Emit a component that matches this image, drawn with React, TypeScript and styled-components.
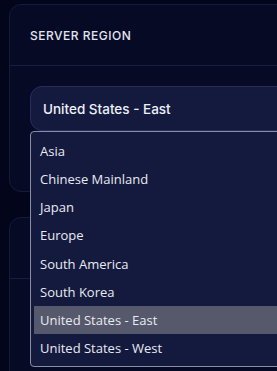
import React, { useState } from "react";
import styled, { createGlobalStyle } from "styled-components";

const GlobalStyle = createGlobalStyle`
  html, body {
    margin: 0;
    padding: 0;
    background-color: #03061a;
    overflow: hidden;
  }
  * {
    box-sizing: border-box;
  }
`;

const Page = styled.div`
  display: flex;
  flex-direction: column;
  gap: 25px;
  padding: 4px 0 0 9px;
  width: 340px;
  min-height: 371px;
  font-family: Inter, "Noto Sans", sans-serif;
`;

const Card = styled.section`
  background-color: #060a25;
  border: 1px solid #151b3b;
  border-radius: 12px;
`;

const CardHeader = styled.div`
  height: 61px;
  display: flex;
  align-items: center;
  padding: 0 20px;
  border-bottom: 1px solid #181e41;
`;

const CardTitle = styled.h2`
  margin: 0;
  font-size: 12px;
  font-weight: 500;
  letter-spacing: 0.5px;
  text-transform: uppercase;
  color: #e2e5f0;
`;

const CardBody = styled.div<{ $bottom: number }>`
  padding: 20px 20px ${({ $bottom }) => $bottom}px 20px;
`;

const SelectWrap = styled.div`
  position: relative;
`;

const SelectBox = styled.div`
  height: 45px;
  display: flex;
  align-items: center;
  padding: 0 12px;
  background-color: #131a3e;
  border: 1px solid #262d5c;
  border-radius: 12px;
  font-size: 13.5px;
  font-weight: 500;
  color: #eef0f8;
`;

const Menu = styled.ul`
  position: absolute;
  top: 100%;
  left: 0;
  right: 0;
  margin: 0;
  padding: 5px 3px 4px 3px;
  list-style: none;
  background-color: #141a3d;
  border: 1px solid #8a8ea4;
  border-radius: 4px;
  z-index: 10;
  font-family: "Open Sans", "Noto Sans", sans-serif;
`;

const MenuItem = styled.li<{ $active: boolean }>`
  height: 28.15px;
  display: flex;
  align-items: center;
  padding: 0 6px;
  font-size: 13px;
  color: #e9eaf2;
  background-color: ${({ $active }) => ($active ? "#56586c" : "transparent")};
  cursor: default;
`;

const regions = [
  "Asia",
  "Chinese Mainland",
  "Japan",
  "Europe",
  "South America",
  "South Korea",
  "United States - East",
  "United States - West",
];

export default function App() {
  const [selected, setSelected] = useState("United States - East");

  return (
    <>
      <GlobalStyle />
      <Page>
        <Card>
          <CardHeader>
            <CardTitle>Server Region</CardTitle>
          </CardHeader>
          <CardBody $bottom={60}>
            <SelectWrap>
              <SelectBox>{selected}</SelectBox>
              <Menu>
                {regions.map((r) => (
                  <MenuItem
                    key={r}
                    $active={r === selected}
                    onClick={() => setSelected(r)}
                  >
                    {r}
                  </MenuItem>
                ))}
              </Menu>
            </SelectWrap>
          </CardBody>
        </Card>
        <Card>
          <CardHeader />
          <CardBody $bottom={120} />
        </Card>
      </Page>
    </>
  );
}
